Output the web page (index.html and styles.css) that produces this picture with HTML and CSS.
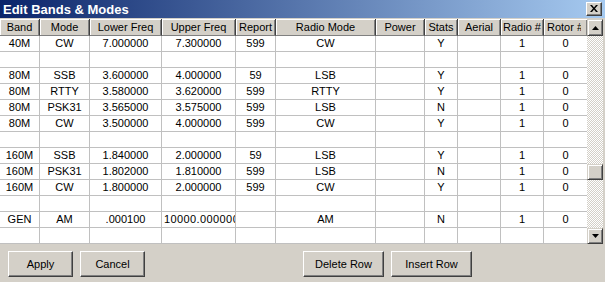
FILE: index.html
```html
<!DOCTYPE html>
<html>
<head>
<meta charset="utf-8">
<link rel="stylesheet" href="styles.css">
</head>
<body>
<div class="window">
  <div class="titlebar">
    <span class="title">Edit Bands &amp; Modes</span>
    <div class="close"><svg width="8" height="7" viewBox="0 0 8 7"><path d="M0 0h2l2 2.5L6 0h2L5 3.5 8 7H6L4 4.5 2 7H0l3-3.5z" fill="#000"/></svg></div>
  </div>
  <div class="gridwrap">
    <div class="grid">
      <div class="row head">
        <div>Band</div><div>Mode</div><div>Lower Freq</div><div>Upper Freq</div><div>Report</div><div>Radio Mode</div><div>Power</div><div>Stats</div><div>Aerial</div><div>Radio #</div><div class="clip"><span class="cliptext">Rotor #</span></div>
      </div>
      <div class="row"><div>40M</div><div>CW</div><div>7.000000</div><div>7.300000</div><div>599</div><div>CW</div><div></div><div>Y</div><div></div><div>1</div><div>0</div></div>
      <div class="row"><div></div><div></div><div></div><div></div><div></div><div></div><div></div><div></div><div></div><div></div><div></div></div>
      <div class="row"><div>80M</div><div>SSB</div><div>3.600000</div><div>4.000000</div><div>59</div><div>LSB</div><div></div><div>Y</div><div></div><div>1</div><div>0</div></div>
      <div class="row"><div>80M</div><div>RTTY</div><div>3.580000</div><div>3.620000</div><div>599</div><div>RTTY</div><div></div><div>Y</div><div></div><div>1</div><div>0</div></div>
      <div class="row"><div>80M</div><div>PSK31</div><div>3.565000</div><div>3.575000</div><div>599</div><div>LSB</div><div></div><div>N</div><div></div><div>1</div><div>0</div></div>
      <div class="row"><div>80M</div><div>CW</div><div>3.500000</div><div>4.000000</div><div>599</div><div>CW</div><div></div><div>Y</div><div></div><div>1</div><div>0</div></div>
      <div class="row"><div></div><div></div><div></div><div></div><div></div><div></div><div></div><div></div><div></div><div></div><div></div></div>
      <div class="row"><div>160M</div><div>SSB</div><div>1.840000</div><div>2.000000</div><div>59</div><div>LSB</div><div></div><div>Y</div><div></div><div>1</div><div>0</div></div>
      <div class="row"><div>160M</div><div>PSK31</div><div>1.802000</div><div>1.810000</div><div>599</div><div>LSB</div><div></div><div>N</div><div></div><div>1</div><div>0</div></div>
      <div class="row"><div>160M</div><div>CW</div><div>1.800000</div><div>2.000000</div><div>599</div><div>CW</div><div></div><div>Y</div><div></div><div>1</div><div>0</div></div>
      <div class="row"><div></div><div></div><div></div><div></div><div></div><div></div><div></div><div></div><div></div><div></div><div></div></div>
      <div class="row"><div>GEN</div><div>AM</div><div>.000100</div><div class="over">10000.000000</div><div></div><div>AM</div><div></div><div>N</div><div></div><div>1</div><div>0</div></div>
      <div class="row"><div></div><div></div><div></div><div></div><div></div><div></div><div></div><div></div><div></div><div></div><div></div></div>
    </div>
    <div class="vscroll">
      <div class="sbtn up"><svg width="7" height="4" viewBox="0 0 7 4"><path d="M3.5 0L7 4H0z" fill="#000"/></svg></div>
      <div class="track"><div class="thumb"></div></div>
      <div class="sbtn down"><svg width="7" height="4" viewBox="0 0 7 4"><path d="M0 0h7L3.5 4z" fill="#000"/></svg></div>
    </div>
  </div>
  <div class="buttons">
    <div class="btn small">Apply</div>
    <div class="btn small">Cancel</div>
    <div class="btn wide push">Delete Row</div>
    <div class="btn wide">Insert Row</div>
  </div>
</div>
</body>
</html>
```

FILE: styles.css
```css
* { box-sizing: border-box; }
html, body { margin: 0; padding: 0; }
body {
  width: 605px;
  height: 282px;
  background: #d4d0c8;
  font-family: "Liberation Sans", Arial, sans-serif;
  font-size: 11px;
  color: #000;
  overflow: hidden;
}
.window { width: 605px; height: 282px; background: #d4d0c8; }

.titlebar {
  height: 18px;
  background: linear-gradient(to right, #0a246a, #a6caf0);
  display: flex;
  align-items: center;
  justify-content: space-between;
  padding: 0 3px 0 3px;
}
.title {
  color: #fff;
  font-weight: bold;
  font-size: 13px;
  letter-spacing: 0;
}
.close {
  width: 16px;
  height: 14px;
  background: #d4d0c8;
  border: 1px solid;
  border-color: #fff #404040 #404040 #fff;
  box-shadow: inset -1px -1px 0 #808080;
  display: flex;
  align-items: center;
  justify-content: center;
  padding-bottom: 1px;
}

.gridwrap {
  margin-top: 1px;
  display: flex;
  height: 225px;
}
.grid {
  width: 587px;
  background: #fff;
}
.row {
  display: grid;
  grid-template-columns: 40px 50px 72px 74px 40px 100px 49px 33px 43px 43px 43px;
  height: 16px;
}
.row > div {
  border-right: 1px solid #c0c0c0;
  border-bottom: 1px solid #c0c0c0;
  text-align: center;
  line-height: 15px;
  overflow: hidden;
  white-space: nowrap;
  padding: 0 2px;
}
.row > div:last-child { border-right: none; }
.row > div.over { letter-spacing: 0.4px; }
.row.head { height: 17px; }
.row.head > div {
  background: #d4d0c8;
  border-right: 1px solid #404040;
  border-bottom: 1px solid #808080;
  box-shadow: inset 1px 1px 0 #fff, inset -1px 0 0 #808080;
  line-height: 16px;
}
.row.head > div.clip { text-align: left; padding-left: 3px; border-right: none; }
.cliptext {
  display: inline-block;
  width: 34px;
  overflow: hidden;
  vertical-align: top;
}

.vscroll {
  width: 16px;
  display: flex;
  flex-direction: column;
}
.sbtn {
  height: 16px;
  background: #d4d0c8;
  border: 1px solid;
  border-color: #d4d0c8 #404040 #404040 #d4d0c8;
  box-shadow: inset 1px 1px 0 #fff, inset -1px -1px 0 #808080;
  display: flex;
  align-items: center;
  justify-content: center;
}
.sbtn.up { height: 17px; }
.track {
  flex: 1;
  background: repeating-conic-gradient(#fff 0 25%, #d4d0c8 0 50%) 0 0 / 2px 2px;
  padding-top: 128px;
}
.thumb {
  height: 16px;
  background: #d4d0c8;
  border: 1px solid;
  border-color: #d4d0c8 #404040 #404040 #d4d0c8;
  box-shadow: inset 1px 1px 0 #fff, inset -1px -1px 0 #808080;
}

.buttons {
  display: flex;
  padding: 7px 0 0 8px;
  gap: 7px;
}
.btn {
  height: 26px;
  background: #d4d0c8;
  border: 1px solid;
  border-color: #fff #404040 #404040 #fff;
  box-shadow: inset -1px -1px 0 #808080;
  display: flex;
  align-items: center;
  justify-content: center;
}
.btn.small { width: 65px; }
.btn.wide { width: 81px; }
.btn.push { margin-left: 151px; }
```
